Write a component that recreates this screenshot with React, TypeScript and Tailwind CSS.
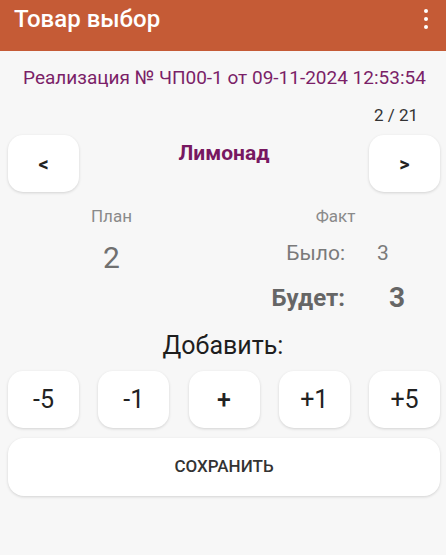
export default function App() {
  const steps = ['-5', '-1', '+', '+1', '+5'];

  return (
    <main
      className="w-[446px] h-[555px] bg-[#f7f7f7] overflow-hidden"
      style={{ fontFamily: 'Roboto, "Noto Sans", sans-serif' }}
    >
      {/* App bar */}
      <header className="h-[51px] bg-[#c55b36] flex items-center justify-between pl-[14px] pr-[18px]">
        <h1 className="text-[24px] leading-none font-medium text-white pb-[14px]">Товар выбор</h1>
        <div className="flex flex-col gap-[4px] pb-[14px]">
          <span className="w-[4px] h-[4px] rounded-full bg-white" />
          <span className="w-[4px] h-[4px] rounded-full bg-white" />
          <span className="w-[4px] h-[4px] rounded-full bg-white" />
        </div>
      </header>

      {/* Document */}
      <p className="mt-[16px] text-center text-[19px] leading-[22px] text-[#7b1f68] pl-[3px]">
        Реализация № ЧП00-1 от 09-11-2024 12:53:54
      </p>
      <p className="mt-[16px] text-right pr-[28px] text-[17px] leading-[20px] text-[#333]">2 / 21</p>

      {/* Item switcher */}
      <section className="mt-[10px] pl-[8px] pr-[6px] flex items-start justify-between">
        <button className="w-[71px] h-[57px] rounded-[15px] bg-white shadow-[0_1px_3px_rgba(0,0,0,0.15)] text-[20px] font-bold text-[#222]">
          &lt;
        </button>
        <h2 className="mt-[6px] text-[21px] leading-[24px] font-bold text-[#771861]">Лимонад</h2>
        <button className="w-[71px] h-[57px] rounded-[15px] bg-white shadow-[0_1px_3px_rgba(0,0,0,0.15)] text-[20px] font-bold text-[#222]">
          &gt;
        </button>
      </section>

      {/* Plan / fact */}
      <section className="grid grid-cols-2 mt-[14px]">
        <div className="flex flex-col items-center">
          <span className="text-[17px] leading-[20px] text-[#8a8a8a]">План</span>
          <span className="mt-[15px] text-[30px] leading-[34px] text-[#707070]">2</span>
        </div>
        <div className="flex flex-col">
          <span className="text-center text-[17px] leading-[20px] text-[#8a8a8a] pl-[2px]">Факт</span>
          <div className="mt-[15px] flex items-center">
            <span className="w-[122px] text-right text-[21px] leading-[24px] text-[#7a7a7a]">Было:</span>
            <span className="ml-[32px] text-[21px] leading-[24px] text-[#7a7a7a]">3</span>
          </div>
          <div className="mt-[19px] flex items-center">
            <span className="w-[122px] text-right text-[24px] leading-[28px] font-bold text-[#666]">Будет:</span>
            <span className="ml-[44px] text-[28px] leading-[28px] font-bold text-[#666]">3</span>
          </div>
        </div>
      </section>

      {/* Add */}
      <p className="mt-[19px] text-center text-[25px] leading-[30px] text-[#1e1e1e]">Добавить:</p>

      <section className="mt-[10px] pl-[8px] pr-[6px] flex justify-between">
        {steps.map((s) => (
          <button
            key={s}
            className={`w-[71px] h-[57px] rounded-[15px] bg-white shadow-[0_1px_3px_rgba(0,0,0,0.15)] text-[25px] text-[#222] ${
              s === '+' ? 'font-medium' : 'font-normal'
            }`}
          >
            {s}
          </button>
        ))}
      </section>

      <div className="pl-[8px] pr-[6px] mt-[10px]">
        <button className="w-full h-[58px] rounded-[16px] bg-white shadow-[0_1px_3px_rgba(0,0,0,0.15)] text-[17px] font-medium text-[#333]">
          СОХРАНИТЬ
        </button>
      </div>
    </main>
  );
}
